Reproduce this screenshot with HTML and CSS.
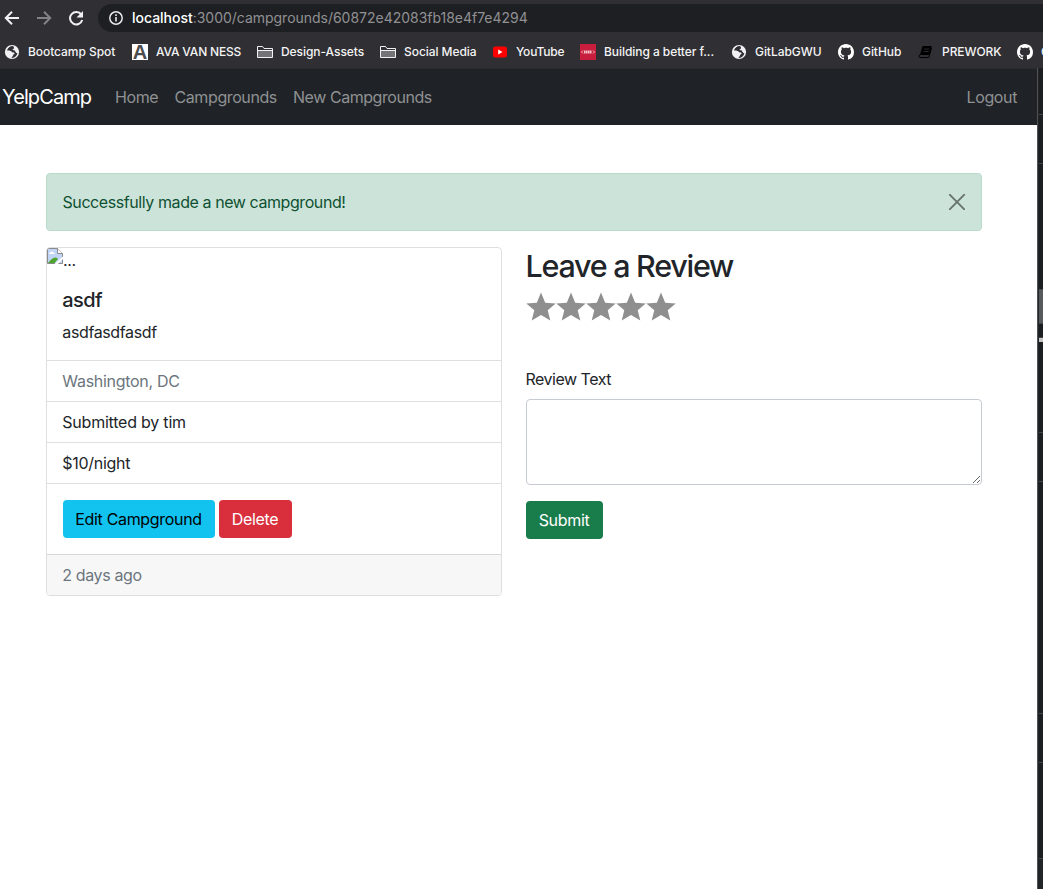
FILE: index.html
```html
<!DOCTYPE html>
<html lang="en">
<head>
<meta charset="utf-8">
<title>YelpCamp</title>
<link rel="stylesheet" href="styles.css">
</head>
<body>
<svg class="defs" width="0" height="0">
  <symbol id="globe" viewBox="0 0 16 16"><circle cx="8" cy="8" r="7.100" fill="#f1f1f3"/><path d="M9.500 2.400C6.500 1.700 4 3.700 3 6.500c2.300-.3 3.900.2 5 1.400.7.8 2.400.2 2.600 1.200.2 1-1.400 1.400-1.700 2.700-.1.900-.9 1.300-1.700 1.700l1 .4c2.500-.1 4.700-2 5.200-4.700C12 9 11.800 7.700 11 6.800c-.8-.8-2.200-.3-2.800-1 1.500-.6 2.500-1.700 1.300-3.400z" fill="#302f33"/><path d="M8.300 5.800C7.500 5.300 7.500 4.500 9 3.900L9.300 2.400C6.600 2 4.700 3.700 3.800 5.600c1.800-.3 3-.1 4.500.2z" fill="#302f33"/><path d="M11 6.800c.8.900 1 2.200 2.400 2.400.3-1.300.1-2.700-.4-3.700z" fill="#f1f1f3"/></symbol>
  <symbol id="folder" viewBox="0 0 16 14"><path d="M.5 12.500v-11h5l1.500 2h8.500v9z" fill="#302f33" stroke="#f1f1f3"/><path d="M1 5.500h14v6.500H1z" fill="#747477"/><path d="M.5 5.500h15" stroke="#f1f1f3"/></symbol>
  <symbol id="github" viewBox="0 0 16 16"><path fill="#fff" d="M8 0C3.580 0 0 3.580 0 8c0 3.540 2.290 6.530 5.470 7.590.4.070.55-.17.55-.38 0-.19-.01-.82-.01-1.490-2.010.37-2.530-.49-2.690-.94-.09-.23-.48-.94-.82-1.130-.28-.15-.68-.52-.01-.53.63-.01 1.080.58 1.230.82.72 1.210 1.870.87 2.330.66.07-.52.28-.87.51-1.070-1.780-.2-3.640-.89-3.640-3.950 0-.87.31-1.590.82-2.150-.08-.2-.36-1.020.08-2.120 0 0 .67-.21 2.200.82.64-.18 1.320-.27 2-.27s1.360.09 2 .27c1.530-1.040 2.200-.82 2.200-.82.44 1.100.16 1.920.08 2.120.51.56.82 1.270.82 2.150 0 3.070-1.870 3.750-3.650 3.950.29.25.54.73.54 1.480 0 1.070-.01 1.930-.01 2.200 0 .21.15.46.55.38A8.010 8.010 0 0 0 16 8c0-4.420-3.580-8-8-8z"/></symbol>
  <symbol id="star" viewBox="0 0 30 30"><path fill="#8f8f8f" d="M15 .5l4.200 10.200 10.500.7-8 6.900 2.600 10.200L15 23l-9.300 5.500 2.600-10.200-8-6.900 10.500-.7z"/></symbol>
</svg>
<div class="browser">
  <div class="toolbar">
    <div class="controls">
      <svg width="16" height="16" viewBox="0 0 16 16"><path d="M15 8H2M8 1.800L1.800 8 8 14.200" fill="none" stroke="#f1f1f3" stroke-width="2"/></svg>
      <svg width="16" height="16" viewBox="0 0 16 16"><path d="M1 8h13M8 1.800L14.200 8 8 14.200" fill="none" stroke="#838286" stroke-width="2"/></svg>
      <svg width="16" height="16" viewBox="0 0 16 16"><path d="M13.300 4.600A6.200 6.200 0 1 0 14.200 10" fill="none" stroke="#f1f1f3" stroke-width="2"/><path d="M15 1v6.500H8.500z" fill="#f1f1f3"/></svg>
    </div>
    <div class="address">
      <svg width="14" height="14" viewBox="0 0 14 14"><circle cx="7" cy="7" r="6.200" fill="none" stroke="#e8e8ea" stroke-width="1.500"/><path d="M7 6v4.500M7 3.300v1.600" stroke="#e8e8ea" stroke-width="1.600"/></svg>
      <span class="url"><b>localhost</b>:3000/campgrounds/60872e42083fb18e4f7e4294</span>
    </div>
  </div>
  <div class="bookmarks">
    <a class="bm w1"><svg width="16" height="16"><use href="#globe"/></svg><span>Bootcamp Spot</span></a>
    <a class="bm w2"><i class="ava">A</i><span class="ava-name">AVA VAN NESS</span></a>
    <a class="bm w3"><svg width="16" height="14"><use href="#folder"/></svg><span>Design-Assets</span></a>
    <a class="bm w4"><svg width="16" height="14"><use href="#folder"/></svg><span>Social Media</span></a>
    <a class="bm w5"><svg width="16" height="16" viewBox="0 0 16 16"><rect x="1" y="2.500" width="14" height="11" rx="2.500" fill="#f00"/><path d="M6.200 5.500v5L10.500 8z" fill="#fff"/></svg><span class="youtube">YouTube</span></a>
    <a class="bm w6"><svg width="16" height="16" viewBox="0 0 16 16"><path fill="#c81d3c" d="M0 0h16v16H0z"/><path d="M3 6.500L1.500 8 3 9.500M13 6.500L14.500 8 13 9.500" fill="none" stroke="#f0b8c2"/><path d="M4 8h7.500" stroke="#f3c3cb" stroke-width="3" stroke-dasharray="1.600 .4"/></svg><span>Building a better f...</span></a>
    <a class="bm w7"><svg width="16" height="16"><use href="#globe"/></svg><span>GitLabGWU</span></a>
    <a class="bm w8"><svg width="16" height="16"><use href="#github"/></svg><span>GitHub</span></a>
    <a class="bm w9"><svg width="16" height="16" viewBox="0 0 16 16"><path d="M4.500 2h9.300L11.500 11H2z" fill="#000"/><path d="M2 11c-1.500 0-1.300 2.500 0 2.500h8.800L13.500 4" fill="none" stroke="#000"/><path d="M6.300 5h5M5.700 7.500h5" stroke="#2c2c30"/></svg><span>PREWORK</span></a>
    <a class="bm w10"><svg width="16" height="16"><use href="#github"/></svg><span>G</span></a>
  </div>
</div>
<div class="viewport">
  <div class="page">
    <nav class="navbar">
      <a class="brand">YelpCamp</a>
      <a class="nav-home">Home</a>
      <a class="nav-camps">Campgrounds</a>
      <a class="nav-new">New Campgrounds</a>
      <a class="logout">Logout</a>
    </nav>
    <main class="container">
      <div class="alert"><span>Successfully made a new campground!</span>
        <svg width="16" height="16" viewBox="0 0 16 16"><path d="M.7.7l14.600 14.600M15.300.7L.7 15.300" stroke="#66726c" stroke-width="1.800" stroke-linecap="round"/></svg>
      </div>
      <div class="row">
        <section class="card">
          <div class="image">
            <svg width="16" height="16" viewBox="0 0 16 16"><path d="M.5.500h10l5 5v10H.5z" fill="#c3d5f6" stroke="#8b8b8b"/><path d="M10.500.5v5h5" fill="#fff" stroke="#8b8b8b"/><path d="M2 6c0-1.500 1.500-1.500 2-2 1-1 2.500 0 2.500.8C8 4.800 8 6 7.500 6z" fill="#fff"/><path d="M1 15c2-3 5-5.500 7-5.500 1.500 0 2.500 1 3 1.500L7.500 15z" fill="#4da52e"/><path d="M7.500 16L16 8.500V11l-5 5z" fill="#fff"/></svg><span>...</span>
          </div>
          <div class="card-body">
            <h5>asdf</h5>
            <p class="description">asdfasdfasdf</p>
          </div>
          <div class="item muted"><span class="place">Washington, DC</span></div>
          <div class="item"><span class="author">Submitted by tim</span></div>
          <div class="item"><span class="price">$10/night</span></div>
          <div class="card-body actions"><button class="btn edit">Edit Campground</button><button class="btn delete">Delete</button></div>
          <div class="footer muted"><span class="age">2 days ago</span></div>
        </section>
        <section class="review">
          <h2>Leave a Review</h2>
          <div class="stars"><svg><use href="#star"/></svg><svg><use href="#star"/></svg><svg><use href="#star"/></svg><svg><use href="#star"/></svg><svg><use href="#star"/></svg></div>
          <label for="body">Review Text</label>
          <textarea id="body"></textarea>
          <button class="btn submit">Submit</button>
        </section>
      </div>
    </main>
  </div>
  <aside class="edge"><i class="e1"></i><i class="e2"></i><i class="e3"></i><i class="thumb"></i><i class="e4"></i><i class="mark"></i><i class="e5"></i><i class="e6"></i><i class="e7"></i><i class="e8"></i><i class="e9"></i></aside>
</div>
</body>
</html>
```
FILE: styles.css
```css
* { box-sizing: border-box; }
body { margin: 0; width: 1043px; height: 889px; overflow: hidden; font: 400 16px/24px Inter, "Liberation Sans", sans-serif; color: #212529; background: #fff; letter-spacing: -.38px; }
.defs { position: absolute; }
svg { display: block; flex: none; }
span, a { white-space: nowrap; }

.browser { height: 68px; overflow: hidden; background: #302f33; color: #f4f4f5; }
.toolbar { display: flex; height: 32px; padding-top: 4px; }
.controls { display: flex; align-items: center; gap: 16px; width: 98px; padding-left: 4px; }
.address { display: flex; flex: 1; align-items: center; gap: 9px; height: 28px; padding-left: 11px; border-radius: 14px 0 0 14px; background: #1e1f22; }
.url { font-size: 14px; letter-spacing: -.02px; color: #919194; }
.url b { font-weight: 500; color: #fff; }
.bookmarks { display: flex; height: 36px; padding: 3px 0 0 4px; align-items: center; font-size: 12px; font-weight: 500; letter-spacing: -.06px; }
.bm { display: flex; flex: none; align-items: center; gap: 8px; }
.w1 { width: 128px; } .w2 { width: 125px; } .w3 { width: 123px; } .w4 { width: 112px; } .w5 { width: 88px; }
.w6 { width: 151px; } .w7 { width: 107px; } .w8 { width: 80px; } .w9 { width: 99px; }
.ava { width: 16px; height: 16px; background: #fff; color: #4c4c4e; font: 700 20px/17px "Liberation Sans", sans-serif; text-align: center; }
.ava-name { letter-spacing: -.17px; }
.youtube { letter-spacing: -.2px; }

.viewport { display: flex; height: 821px; }
.page { width: 1037px; }
.navbar { display: flex; align-items: center; height: 57px; padding: 0 20px 1px 2px; border-top: 1px solid #2c2b2b; background: #1f2327; color: #8f9193; }
.brand { width: 113px; font-size: 20px; letter-spacing: -.9px; color: #fff; }
.nav-home { width: 59.5px; }
.nav-camps { width: 118.5px; letter-spacing: -.4px; }
.nav-new { letter-spacing: -.45px; }
.logout { margin-left: auto; }
.container { padding: 48px 55px 0 46px; }
.alert { display: flex; align-items: center; justify-content: space-between; height: 58px; margin-bottom: 16px; padding: 0 16px 0 15.500px; border: 1px solid #badbcc; border-radius: 4px; background: #cce3d9; color: #0f5132; letter-spacing: -.42px; }
.row { display: grid; grid-template-columns: 456px 456px; gap: 24px; align-items: start; }
.card { border: 1px solid #dfdfdf; border-radius: 4px; overflow: hidden; }
.image { display: flex; height: 24px; }
.card-body { padding: 16px 15.300px; }
h5 { margin: 0 0 8px; font-size: 20px; line-height: 24px; font-weight: 500; letter-spacing: -.6px; }
p { margin: 0; }
.item { height: 41px; padding: 8px 15.300px; border-top: 1px solid #dfdfdf; }
.author { letter-spacing: -.22px; }
.place, .price { letter-spacing: -.3px; }
.muted { color: #6c757d; }
.card .actions { display: flex; gap: 4px; padding: 16px; border-top: 1px solid #dfdfdf; height: 71px; }
.btn { height: 38px; padding: 0 1px 0 0; border: 0; border-radius: 4px; font: inherit; letter-spacing: -.32px; white-space: nowrap; color: #fff; }
.edit { width: 152px; background: #12c2ef; color: #000; }
.delete { width: 73px; background: #d92f3d; }
.footer { height: 41px; padding: 8px 15.300px; border-top: 1px solid #d8d8d8; background: #f7f7f7; }
h2 { height: 37px; margin: 0 0 8px -.5px; font-size: 30.500px; line-height: 37px; font-weight: 500; letter-spacing: -1.270px; white-space: nowrap; }
.stars { display: flex; height: 30px; margin-bottom: 45px; }
.stars svg { width: 30px; height: 30px; }
label { display: block; height: 24px; margin: 0 0 8px -.5px; letter-spacing: -.5px; }
textarea { display: block; width: 456px; height: 86px; margin: 0 0 16px; border: 1px solid #c6cad3; border-radius: 4px; background: #fff; }
.submit { width: 77px; background: #197c4b; }

.edge { display: flex; flex-direction: column; width: 6px; border-left: 1px solid #505153; padding-left: 1px; background: #222527; }
.edge i { flex: none; border-bottom: 1px solid #464748; background: #1c1e20; }
.e1 { height: 47px; }
.e2 { height: 49px; }
.e3 { height: 126px; }
.edge .thumb { height: 34px; background: #58595a; }
.e4 { height: 14px; }
.edge .mark { height: 4px; background: #c4c4c4; border: 0; }
.e5 { height: 91px; }
.e6 { height: 49px; }
.e7 { height: 232px; }
.e8 { height: 49px; }
.e9 { height: 96px; }
```
